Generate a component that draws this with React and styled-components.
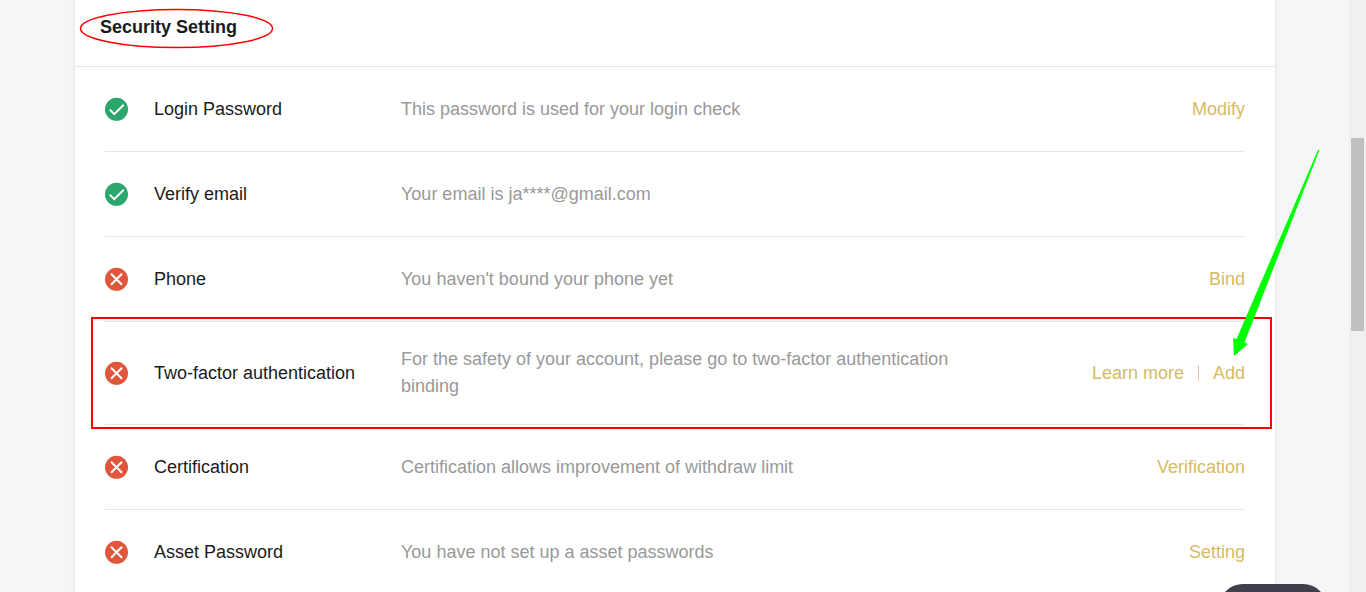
import React from 'react';
import styled, { createGlobalStyle } from 'styled-components';

const GlobalStyle = createGlobalStyle`
  * {
    box-sizing: border-box;
  }
  body {
    margin: 0;
    background: #f4f6f8;
    font-family: "Liberation Sans", Arial, sans-serif;
    font-size: 18px;
    color: #1a1b1c;
  }
`;

const Screen = styled.div`
  display: flex;
  height: 100vh;
  overflow: hidden;
`;

const Content = styled.main`
  flex: 1;
  min-width: 0;
  padding: 0 74px 0 75px;
`;

const Card = styled.section`
  min-height: 100%;
  background: #fff;
  box-shadow: 0 0 4px rgba(30, 40, 70, 0.12);
`;

const CardHeader = styled.header`
  padding: 12px 25px 24px;
  border-bottom: 1px solid #e3e6ee;
`;

const Title = styled.h2`
  position: relative;
  display: inline-block;
  margin: 0;
  font-size: 18px;
  line-height: 30px;
  vertical-align: top;
`;

const TitleMark = styled.svg`
  position: absolute;
  top: -4px;
  left: -21px;
  overflow: visible;
`;

const List = styled.ul`
  margin: 0;
  padding: 0 30px;
  list-style: none;
`;

const Row = styled.li`
  position: relative;
  display: flex;
  align-items: center;
  padding: 24px 0;
  border-bottom: 1px solid #e3e6ee;
`;

const StatusIcon = styled.svg`
  flex: none;
  margin-right: 25px;
`;

const Name = styled.h3`
  flex: none;
  width: 247px;
  margin: 0;
  font-size: 18px;
  font-weight: normal;
  line-height: 36px;
`;

const Description = styled.p`
  flex: 0 1 570px;
  margin: 0;
  line-height: 27px;
  color: #999;
`;

const Actions = styled.div`
  display: flex;
  align-items: center;
  margin-left: auto;
  line-height: 27px;
  white-space: nowrap;
`;

const ActionLink = styled.a`
  color: #d6bb63;
  text-decoration: none;

  & + & {
    display: flex;
    align-items: center;
  }

  & + &::before {
    content: '';
    width: 1px;
    height: 16px;
    margin: 0 14px;
    background: #e3c4a0;
  }
`;

const Frame = styled.div`
  position: absolute;
  inset: -5px -27px -5px -14px;
  border: 2px solid #f00;
  pointer-events: none;
`;

const Arrow = styled.svg`
  position: absolute;
  top: -174px;
  right: -76px;
  pointer-events: none;
`;

const ScrollTrack = styled.div`
  flex: none;
  width: 17px;
  padding: 138px 2px 0;
  background: #f0f0f0;
`;

const ScrollThumb = styled.div`
  height: 193px;
  background: #c0c0c0;
`;

const HelpButton = styled.button`
  position: fixed;
  right: 39px;
  bottom: -40px;
  width: 108px;
  height: 48px;
  border: 0;
  border-radius: 24px;
  background: #413f4b;
`;

const items = [
  {
    name: 'Login Password',
    done: true,
    text: 'This password is used for your login check',
    actions: ['Modify'],
  },
  {
    name: 'Verify email',
    done: true,
    text: 'Your email is ja****@gmail.com',
    actions: [],
  },
  {
    name: 'Phone',
    done: false,
    text: "You haven't bound your phone yet",
    actions: ['Bind'],
  },
  {
    name: 'Two-factor authentication',
    done: false,
    text: 'For the safety of your account, please go to two-factor authentication binding',
    actions: ['Learn more', 'Add'],
    highlighted: true,
  },
  {
    name: 'Certification',
    done: false,
    text: 'Certification allows improvement of withdraw limit',
    actions: ['Verification'],
  },
  {
    name: 'Asset Password',
    done: false,
    text: 'You have not set up a asset passwords',
    actions: ['Setting'],
  },
];

const Status = ({ done }) => (
  <StatusIcon
    width="24"
    height="24"
    viewBox="0 0 24 24"
    fill="none"
    role="img"
    aria-label={done ? 'Completed' : 'Not set'}
  >
    <circle cx="11.5" cy="12.3" r="11.5" fill={done ? '#2ba66d' : '#e0563b'} />
    <path
      d={done ? 'M4.8 12.6L9.2 17.2L18.8 7.8' : 'M6 6.8L17 17.8M17 6.8L6 17.8'}
      stroke="#fff"
      strokeWidth="2"
    />
  </StatusIcon>
);

const SecurityRow = ({ item }) => (
  <Row>
    <Status done={item.done} />
    <Name>{item.name}</Name>
    <Description>{item.text}</Description>
    <Actions>
      {item.actions.map(action => (
        <ActionLink key={action} href="#">{action}</ActionLink>
      ))}
    </Actions>
    {item.highlighted && (
      <>
        <Frame />
        <Arrow width="90" height="210" viewBox="0 0 90 210" aria-hidden="true">
          <path d="M88 2L87 2L5.500 191L2 190L3 208L17 196L13.500 194.500L88.500 2Z" fill="#0f0" />
        </Arrow>
      </>
    )}
  </Row>
);

const App = () => {
  return (
    <Screen>
      <GlobalStyle />
      <Content>
        <Card>
          <CardHeader>
            <Title>
              Security Setting
              <TitleMark width="194" height="40" viewBox="0 0 194 40" fill="none" aria-hidden="true">
                <ellipse cx="97.500" cy="20.500" rx="96" ry="19" stroke="#f00" strokeWidth="1.5" />
              </TitleMark>
            </Title>
          </CardHeader>
          <List>
            {items.map(item => (
              <SecurityRow key={item.name} item={item} />
            ))}
          </List>
        </Card>
      </Content>
      <ScrollTrack>
        <ScrollThumb />
      </ScrollTrack>
      <HelpButton type="button" aria-label="Help" />
    </Screen>
  );
};

export default App;
